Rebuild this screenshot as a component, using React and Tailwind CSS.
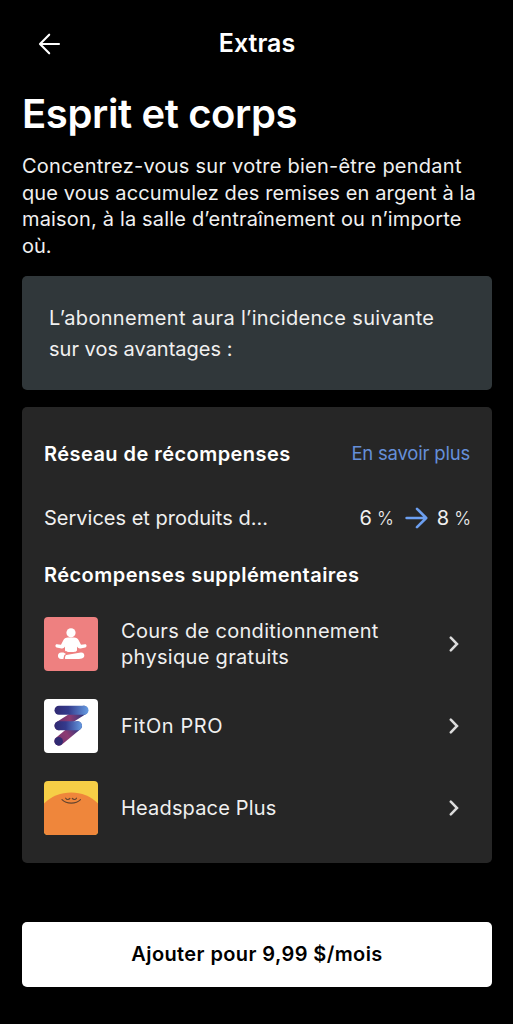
import { useId } from "react";

function BackArrow() {
  return (
    <svg className="h-6 w-6" viewBox="0 0 24 24" fill="none" stroke="white" strokeWidth="2.1" strokeLinecap="round" strokeLinejoin="round">
      <path d="M22 12H3.500M12.200 2.700 3 12l9.200 9.300" />
    </svg>
  );
}

function ForwardArrow() {
  return (
    <svg className="h-6 w-6" viewBox="0 0 24 24" fill="none" stroke="#6c9ff0" strokeWidth="2.6" strokeLinecap="round" strokeLinejoin="round">
      <path d="M2.6 12h18.8M13 2.8l9.200 9.200-9.200 9.200" />
    </svg>
  );
}

function Chevron() {
  return (
    <svg className="h-4 w-3 shrink-0" viewBox="0 0 12 16" fill="none" stroke="#dcdcdc" strokeWidth="2.5" strokeLinecap="round" strokeLinejoin="miter">
      <path d="M2.800 1.700 9 8l-6.200 6.300" />
    </svg>
  );
}

function YogaIcon() {
  return (
    <svg className="h-full w-full" viewBox="0 0 54 54" fill="white">
      <rect width="54" height="54" fill="#ee8080" />
      <circle cx="27" cy="15.800" r="4.600" />
      <path d="M24 20.600h6c2.400 0 4 1 4.800 2.900l2.200 4.200 4.100-.4c1.800-.1 2 2.600.2 3.200l-4.800.9c-1.600.2-2.500-.3-3.200-1.400l-.3-.4v3.200c0 2-1.800 2.300-6 2.300s-6-.3-6-2.300v-3.200l-.3.4c-.7 1.100-1.600 1.600-3.200 1.400l-4.800-.9c-1.800-.6-1.600-3.300.2-3.200l4.100.4 2.200-4.200c.8-1.900 2.400-2.900 4.800-2.900Z" />
      <path d="M17.200 35.400h2.300l2.500 1.500-1.700 1.200-1 3.900h-2.100c-4.300 0-4.300-6.600 0-6.600Z" />
      <path d="m22.300 38.100 14.500-2.600c4-.7 5 5.300 1 5.900-1.500.3-4 .6-6 .6H21.100c-.2-2 .1-3.400 1.200-3.900Z" />
    </svg>
  );
}

function FitOnIcon() {
  const id = useId();
  return (
    <svg className="h-full w-full" viewBox="0 0 54 54" fill="none" strokeLinecap="round" strokeWidth="9">
      <defs>
        <linearGradient id={`${id}bar`} gradientUnits="userSpaceOnUse" x1="11" y1="0" x2="44" y2="0">
          <stop offset="0" stopColor="#302a72" />
          <stop offset=".4" stopColor="#343a8c" />
          <stop offset="1" stopColor="#659ae0" />
        </linearGradient>
        <linearGradient id={`${id}mid`} gradientUnits="userSpaceOnUse" x1="11" y1="0" x2="38" y2="0">
          <stop offset="0" stopColor="#302a72" />
          <stop offset=".4" stopColor="#343a8c" />
          <stop offset="1" stopColor="#659ae0" />
        </linearGradient>
        <linearGradient id={`${id}fold`} gradientUnits="userSpaceOnUse" x1="15" y1="0" x2="40" y2="0">
          <stop offset="0" stopColor="#6d326f" />
          <stop offset=".42" stopColor="#8d3b72" />
          <stop offset="1" stopColor="#30377f" />
        </linearGradient>
        <linearGradient id={`${id}tail`} gradientUnits="userSpaceOnUse" x1="14" y1="42" x2="34" y2="28">
          <stop offset="0" stopColor="#76346f" />
          <stop offset=".45" stopColor="#8d3b72" />
          <stop offset="1" stopColor="#30377f" />
        </linearGradient>
      </defs>
      <rect width="54" height="54" fill="white" />
      <path d="M15 26.800 39.500 11.200" stroke={`url(#${id}fold)`} />
      <path d="M14.800 42.200 33.500 26.800" stroke={`url(#${id}tail)`} />
      <path d="M15 11.200h25" stroke={`url(#${id}bar)`} />
      <path d="M15 26.800h18.500" stroke={`url(#${id}mid)`} />
      <circle cx="14.700" cy="42.200" r="4.200" fill="#302a72" />
    </svg>
  );
}

function HeadspaceIcon() {
  return (
    <svg className="h-full w-full" viewBox="0 0 54 54" fill="none">
      <rect width="54" height="54" fill="#f6ce46" />
      <path d="M0 22.500C14 8 40 7.500 54 22.500V54H0Z" fill="#ef863b" />
      <g stroke="#64452f" strokeWidth="1.200" strokeLinecap="round">
        <path d="M18 18.700c4.500 4.600 14 4.600 18.500 0" />
        <path d="M21.700 17.200c1 1.700 3.200 1.700 4.200.2M28.300 17.400c1 1.500 3.200 1.500 4.200-.2" />
      </g>
    </svg>
  );
}

function Percent({ value }) {
  return (
    <span className="flex items-baseline gap-[5px]">
      {value}
      <span className="text-[18px] font-light tracking-[-1px]">%</span>
    </span>
  );
}

const rewards = [
  { label: "Cours de conditionnement physique gratuits", Icon: YogaIcon, spacing: "tracking-[0.31px]" },
  { label: "FitOn PRO", Icon: FitOnIcon, spacing: "tracking-[0.58px]" },
  { label: "Headspace Plus", Icon: HeadspaceIcon, spacing: "tracking-[0.17px]" },
];

export default function App() {
  return (
    <main className="flex h-[1024px] w-full flex-col bg-black pr-[21px] pl-[22px] font-['Inter',sans-serif] text-[20px] text-[#f0f0f0]">
      <header className="grid h-[87px] shrink-0 grid-cols-[1fr_auto_1fr] items-center">
        <button aria-label="Retour" className="ml-[15px] w-6">
          <BackArrow />
        </button>
        <h2 className="text-[25px] font-semibold text-white">Extras</h2>
      </header>

      <h1 className="mt-[3px] h-12 shrink-0 text-[40px] leading-[48px] font-semibold tracking-[-0.38px] whitespace-nowrap text-white">Esprit et corps</h1>
      <p className="mt-[15px] h-[107px] shrink-0 leading-[26.7px] whitespace-nowrap">
        <span className="tracking-[0.25px]">Concentrez-vous sur votre bien-être pendant</span><br />
        <span className="tracking-[0.12px]">que vous accumulez des remises en argent à la</span><br />
        <span className="tracking-[0.17px]">maison, à la salle d’entraînement ou n’importe</span><br />
        où.
      </p>

      <section className="mt-4 h-[114px] shrink-0 rounded-[5px] bg-[#30373a] px-[27px] pt-[27px] leading-[30.5px] whitespace-nowrap">
        <span className="tracking-[0.33px]">L’abonnement aura l’incidence suivante</span><br />
        sur vos avantages :
      </section>

      <section className="mt-[16.5px] flex h-[456px] shrink-0 flex-col rounded-[5px] bg-[#262626] px-[22px] pt-[31.5px]">
        <div className="flex h-8 items-center justify-between">
          <h3 className="font-semibold tracking-[0.45px] text-white">Réseau de récompenses</h3>
          <a className="text-[18.5px] tracking-[-0.2px] text-[#658fd9]">En savoir plus</a>
        </div>
        <div className="mt-8 flex h-8 items-center justify-between">
          <span>Services et produits d...</span>
          <div className="flex items-center">
            <Percent value="6" />
            <span className="mr-[9px] ml-[11px]"><ForwardArrow /></span>
            <Percent value="8" />
          </div>
        </div>
        <h3 className="mt-[25px] h-8 leading-8 font-semibold tracking-[0.45px] text-white">Récompenses supplémentaires</h3>
        <ul className="mt-[25.5px] flex flex-col gap-7">
          {rewards.map(({ label, Icon, spacing }) => (
            <li key={label} className="flex h-[54px] items-center">
              <div className="h-[54px] w-[54px] shrink-0 overflow-hidden rounded-[4px]">
                <Icon />
              </div>
              <span className={`ml-[23px] w-[290px] pt-px leading-[26.5px] ${spacing}`}>{label}</span>
              <span className="mr-2.5 ml-auto"><Chevron /></span>
            </li>
          ))}
        </ul>
      </section>

      <button className="mt-[59px] h-[65px] shrink-0 rounded-[5px] bg-white font-semibold tracking-[0.4px] text-black">
        Ajouter pour 9,99 $/mois
      </button>
    </main>
  );
}
